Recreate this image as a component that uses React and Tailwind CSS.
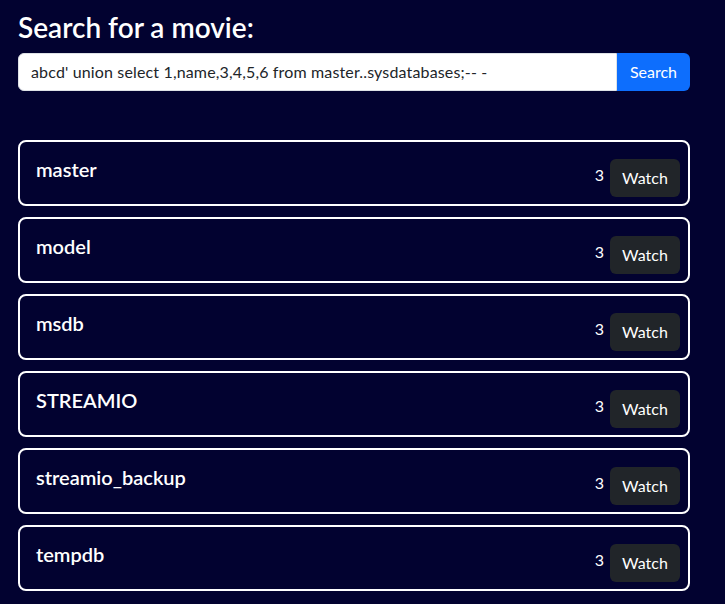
import React from "react";

const databases = ["master", "model", "msdb", "STREAMIO", "streamio_backup", "tempdb"];

export default function App() {
  return (
    <div className="min-h-screen bg-[#020230] pt-[11px] font-['Lato',sans-serif]">
      <div className="mx-[18px] w-[672px]">
        <h3 className="mb-2 text-[28px] font-semibold leading-[1.2] text-white">Search for a movie:</h3>

        <div className="flex h-[38px]">
          <input
            className="min-w-0 flex-1 rounded-l-[6px] border border-[#dee2e6] bg-white px-3 text-[16px] tracking-[0.15px] text-[#212529] outline-none"
            defaultValue="abcd' union select 1,name,3,4,5,6 from master..sysdatabases;-- -"
          />
          <button className="w-[73px] rounded-r-[6px] bg-[#0d6efd] text-[16px] text-white">Search</button>
        </div>

        <div className="mt-[49px] flex flex-col gap-[11px]">
          {databases.map((name) => (
            <div key={name} className="flex h-[66px] justify-between rounded-[8px] border-2 border-white">
              <h5 className="pl-4 pt-[15px] text-[20px] font-semibold leading-6 text-white">{name}</h5>
              <div className="flex items-end pb-[7px] pr-[8px]">
                <span className="mb-[10px] mr-[6px] text-[16px] leading-6 text-white">3</span>
                <button className="h-[38px] w-[70px] rounded-[6px] bg-[#212529] text-[16px] text-white">Watch</button>
              </div>
            </div>
          ))}
        </div>
      </div>
    </div>
  );
}
